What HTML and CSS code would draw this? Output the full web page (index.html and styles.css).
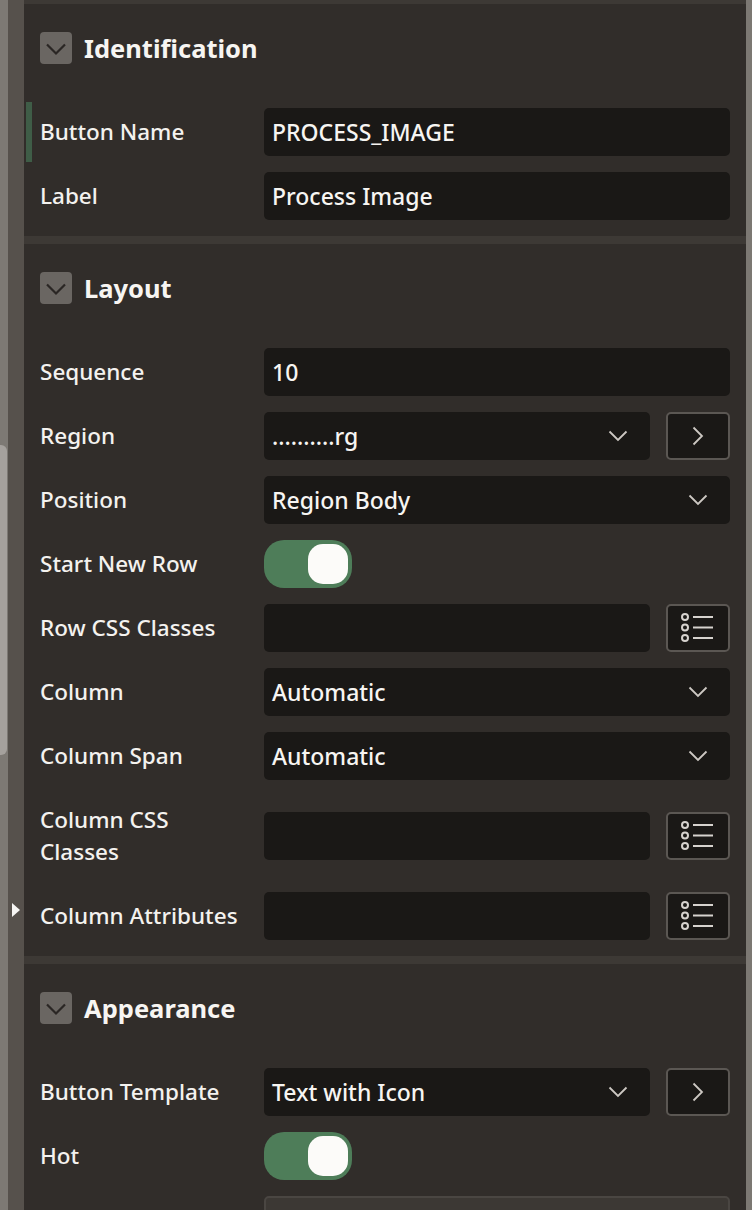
FILE: index.html
```html
<!DOCTYPE html>
<html lang="en">
<head>
<meta charset="utf-8">
<title>Button properties</title>
<link rel="stylesheet" href="styles.css">
</head>
<body>
<div class="app">
  <div class="edge">
    <div class="track"><div class="thumb"></div></div>
    <div class="gutter"><span class="tri"></span></div>
  </div>

  <main class="panel">
    <section class="group first">
      <header class="group-head">
        <button class="collapse" aria-label="Collapse"><svg viewBox="0 0 32 32" width="32" height="32"><path d="M7 12.5 L16 21.5 L25 12.5" /></svg></button>
        <h2>Identification</h2>
      </header>
      <div class="rows">
        <div class="row active">
          <div class="label">Button Name</div>
          <div class="ctl"><div class="field">PROCESS_IMAGE</div></div>
        </div>
        <div class="row">
          <div class="label">Label</div>
          <div class="ctl"><div class="field">Process Image</div></div>
        </div>
      </div>
    </section>

    <section class="group">
      <header class="group-head">
        <button class="collapse" aria-label="Collapse"><svg viewBox="0 0 32 32" width="32" height="32"><path d="M7 12.5 L16 21.5 L25 12.5" /></svg></button>
        <h2>Layout</h2>
      </header>
      <div class="rows">
        <div class="row">
          <div class="label">Sequence</div>
          <div class="ctl"><div class="field">10</div></div>
        </div>
        <div class="row">
          <div class="label">Region</div>
          <div class="ctl">
            <div class="field select"><span>..........rg</span><svg class="chev" viewBox="0 0 20 12" width="20" height="12"><path d="M1.5 1.5 L10 10 L18.5 1.5"/></svg></div>
            <button class="side"><svg class="chev" viewBox="0 0 12 20" width="12" height="20"><path d="M1.5 1.5 L10 10 L1.5 18.5"/></svg></button>
          </div>
        </div>
        <div class="row">
          <div class="label">Position</div>
          <div class="ctl"><div class="field select"><span>Region Body</span><svg class="chev" viewBox="0 0 20 12" width="20" height="12"><path d="M1.5 1.5 L10 10 L18.5 1.5"/></svg></div></div>
        </div>
        <div class="row">
          <div class="label">Start New Row</div>
          <div class="ctl"><div class="toggle on"><span class="knob"></span></div></div>
        </div>
        <div class="row">
          <div class="label">Row CSS Classes</div>
          <div class="ctl">
            <div class="field"></div>
            <button class="side"><svg class="list" viewBox="0 0 34 30" width="34" height="30"><circle cx="4" cy="4" r="3"/><circle cx="4" cy="14.5" r="3"/><circle cx="4" cy="25" r="3"/><path d="M12 4 H32 M12 14.5 H32 M12 25 H32"/></svg></button>
          </div>
        </div>
        <div class="row">
          <div class="label">Column</div>
          <div class="ctl"><div class="field select"><span>Automatic</span><svg class="chev" viewBox="0 0 20 12" width="20" height="12"><path d="M1.5 1.5 L10 10 L18.5 1.5"/></svg></div></div>
        </div>
        <div class="row">
          <div class="label">Column Span</div>
          <div class="ctl"><div class="field select"><span>Automatic</span><svg class="chev" viewBox="0 0 20 12" width="20" height="12"><path d="M1.5 1.5 L10 10 L18.5 1.5"/></svg></div></div>
        </div>
        <div class="row">
          <div class="label">Column CSS Classes</div>
          <div class="ctl">
            <div class="field"></div>
            <button class="side"><svg class="list" viewBox="0 0 34 30" width="34" height="30"><circle cx="4" cy="4" r="3"/><circle cx="4" cy="14.5" r="3"/><circle cx="4" cy="25" r="3"/><path d="M12 4 H32 M12 14.5 H32 M12 25 H32"/></svg></button>
          </div>
        </div>
        <div class="row">
          <div class="label">Column Attributes</div>
          <div class="ctl">
            <div class="field"></div>
            <button class="side"><svg class="list" viewBox="0 0 34 30" width="34" height="30"><circle cx="4" cy="4" r="3"/><circle cx="4" cy="14.5" r="3"/><circle cx="4" cy="25" r="3"/><path d="M12 4 H32 M12 14.5 H32 M12 25 H32"/></svg></button>
          </div>
        </div>
      </div>
    </section>

    <section class="group">
      <header class="group-head">
        <button class="collapse" aria-label="Collapse"><svg viewBox="0 0 32 32" width="32" height="32"><path d="M7 12.5 L16 21.5 L25 12.5" /></svg></button>
        <h2>Appearance</h2>
      </header>
      <div class="rows">
        <div class="row">
          <div class="label">Button Template</div>
          <div class="ctl">
            <div class="field select"><span>Text with Icon</span><svg class="chev" viewBox="0 0 20 12" width="20" height="12"><path d="M1.5 1.5 L10 10 L18.5 1.5"/></svg></div>
            <button class="side"><svg class="chev" viewBox="0 0 12 20" width="12" height="20"><path d="M1.5 1.5 L10 10 L1.5 18.5"/></svg></button>
          </div>
        </div>
        <div class="row">
          <div class="label">Hot</div>
          <div class="ctl"><div class="toggle on"><span class="knob"></span></div></div>
        </div>
        <div class="row">
          <div class="label"></div>
          <div class="ctl"><div class="field disabled"></div></div>
        </div>
      </div>
    </section>
  </main>

  <div class="vscroll"></div>
</div>
</body>
</html>
```

FILE: styles.css
```css
* { box-sizing: border-box; }

html, body {
  margin: 0;
  padding: 0;
  height: 1210px;
  overflow: hidden;
  background: #312d2a;
  font-family: "Noto Sans", "Open Sans", sans-serif;
  color: #f4f2ef;
}

.app {
  display: flex;
  height: 1210px;
}

/* left edge: neighbour pane scrollbar + splitter gutter */
.edge {
  display: flex;
  flex: 0 0 24px;
}
.track {
  width: 8px;
  background: #7d7974;
  padding-top: 445px;
}
.thumb {
  width: 7px;
  height: 310px;
  background: #a5a19d;
  border-radius: 0 6px 6px 0;
}
.gutter {
  width: 16px;
  background: #56514c;
  padding-top: 903px;
  padding-left: 4px;
}
.tri {
  display: block;
  width: 0;
  height: 0;
  border-left: 8px solid #f7f6f4;
  border-top: 7.5px solid transparent;
  border-bottom: 7.5px solid transparent;
}

.vscroll {
  flex: 0 0 6px;
  background: #7c7873;
}

.panel {
  flex: 1;
  background: #312d2a;
}

.group {
  border-top: 8px solid #3d3935;
  padding: 28px 16px 16px 16px;
}
.group.first {
  border-top-width: 4px;
}

.group-head {
  display: flex;
  align-items: center;
  gap: 12px;
  height: 32px;
  margin-bottom: 44px;
}
.group-head h2 {
  margin: 0;
  font-size: 25.5px;
  font-weight: 700;
  line-height: 32px;
  color: #f7f5f2;
}
.collapse {
  width: 32px;
  height: 32px;
  padding: 0;
  border: 0;
  border-radius: 4px;
  background: #6a6662;
  display: flex;
  align-items: center;
  justify-content: center;
}
.collapse svg path {
  fill: none;
  stroke: #2a2624;
  stroke-width: 2.2;
}

.rows {
  display: flex;
  flex-direction: column;
  gap: 16px;
}

.row {
  position: relative;
  display: grid;
  grid-template-columns: 224px 1fr;
  align-items: center;
  min-height: 48px;
}
.row.active::before {
  content: "";
  position: absolute;
  left: -14px;
  top: -6px;
  bottom: -6px;
  width: 6px;
  background: #3f5d47;
}

.label {
  font-size: 22.5px;
  font-weight: 500;
  line-height: 32px;
  padding: 8px 16px 8px 0;
  color: #f4f2ef;
}

.ctl {
  display: flex;
  gap: 16px;
  align-items: center;
}

.field {
  flex: 1;
  height: 48px;
  background: #1a1816;
  border-radius: 5px;
  padding: 0 8px;
  font-size: 23px;
  font-weight: 500;
  line-height: 48px;
  color: #f7f5f2;
  display: flex;
  align-items: center;
  white-space: nowrap;
}
.field.select {
  justify-content: space-between;
  padding-right: 22px;
}
.field.disabled {
  background: #3c3834;
  border: 2px solid #4a4642;
}

.chev path {
  fill: none;
  stroke: #cdc8c3;
  stroke-width: 1.8;
}

.side {
  flex: 0 0 64px;
  width: 64px;
  height: 48px;
  padding: 0;
  background: #1a1816;
  border: 2px solid #5b5753;
  border-radius: 5px;
  display: flex;
  align-items: center;
  justify-content: center;
}
.list circle {
  fill: none;
  stroke: #d6d2ce;
  stroke-width: 2;
}
.list path {
  fill: none;
  stroke: #d6d2ce;
  stroke-width: 2;
}

.toggle {
  width: 88px;
  height: 48px;
  border-radius: 20px;
  background: #4e7d59;
  padding: 4px;
  display: flex;
  justify-content: flex-end;
}
.knob {
  width: 40px;
  height: 40px;
  border-radius: 15px;
  background: #fcfbf9;
}
```
